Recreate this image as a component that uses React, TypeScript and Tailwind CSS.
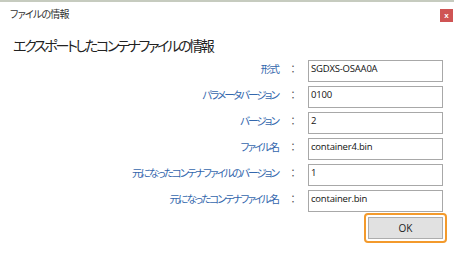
import React from "react";

const rows: [string, string][] = [
  ["形式", "SGDXS-OSAA0A"],
  ["パラメータバージョン", "0100"],
  ["バージョン", "2"],
  ["ファイル名", "container4.bin"],
  ["元になったコンテナファイルのバージョン", "1"],
  ["元になったコンテナファイル名", "container.bin"],
];

const jp = "font-['Noto_Sans_CJK_JP',sans-serif] [font-feature-settings:'palt']";

export default function App() {
  return (
    <div className="w-[454px] h-[259px] bg-white flex flex-col overflow-hidden">
      <div className="h-[2px] bg-[#c6cbbf]" />
      <div className="flex items-start justify-between h-[26px]">
        <div className={`${jp} text-[10px] leading-[14px] tracking-[-0.8px] text-[#333] pl-[10px] pt-[5px]`}>ファイルの情報</div>
        <div className="mt-[7px] mr-[1px] w-[13px] h-[13px] bg-[#cf5454] flex items-center justify-center text-white text-[8px] leading-none font-bold font-['Liberation_Sans',sans-serif]">
          x
        </div>
      </div>
      <div className={`${jp} text-[14px] leading-[18px] tracking-[-2.3px] text-[#222] pl-[13px] pt-[8px]`}>
        エクスポートしたコンテナファイルの情報
      </div>
      <div className="mt-[6px] grid grid-cols-[278px_30px_135px] gap-y-[4px] auto-rows-[22px]">
        {rows.map(([label, value]) => (
          <React.Fragment key={label}>
            <div className={`${jp} text-right text-[10.5px] leading-[16px] tracking-[-1.9px] pt-[1px] text-[#3467ad]`}>{label}</div>
            <div className={`${jp} text-center text-[10px] leading-[16px] pt-[1px] text-[#555]`}>：</div>
            <div className="border border-[#a8a8a8] bg-white px-[2px] pt-[1px] font-['Open_Sans',sans-serif] text-[9.5px] leading-[13px] tracking-[-0.2px] text-[#111]">
              {value}
            </div>
          </React.Fragment>
        ))}
      </div>
      <div className="flex justify-end pr-[7px] mt-[1px]">
        <div className="border-2 border-[#f39a2c] rounded-[4px] p-[2px]">
          <div className="w-[75px] h-[22px] bg-[#e1e1e1] border border-[#adadad] flex items-center justify-center font-['Open_Sans',sans-serif] text-[10px] text-[#222]">
            OK
          </div>
        </div>
      </div>
    </div>
  );
}
